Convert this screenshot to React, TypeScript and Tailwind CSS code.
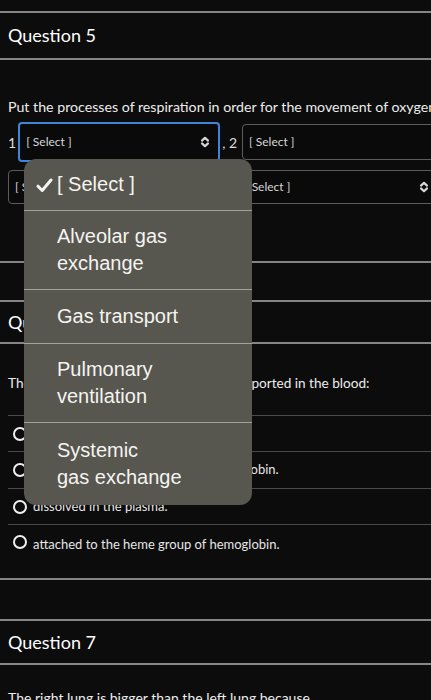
import React from 'react';

function UpDown() {
  return (
    <svg width="10" height="12" viewBox="0 0 10 12" fill="none" stroke="currentColor" strokeWidth="2.2" strokeLinecap="round" strokeLinejoin="round">
      <path d="M2 4.6 5 1.8 8 4.6" />
      <path d="M2 7.4 5 10.2 8 7.4" />
    </svg>
  );
}

function Select({ className }: { className: string }) {
  return (
    <div className={`flex shrink-0 items-center justify-between pl-[6px] pr-[8px] rounded-[4px] bg-[#0a0a0a] text-[12px] text-[#d6d6d6] ${className}`}>
      <span className="whitespace-nowrap">[ Select ]</span>
      <UpDown />
    </div>
  );
}

function Rule() {
  return <div className="h-[2px] bg-[#858585]" />;
}

function Radio({ label, className }: { label: string; className: string }) {
  return (
    <div className={`flex gap-[6px] px-[5px] text-[13px] text-[#e6e6e6] ${className}`}>
      <span className="w-[14px] h-[14px] shrink-0 rounded-full border-2 border-[#f0f0f0]" />
      <span className="whitespace-nowrap">{label}</span>
    </div>
  );
}

const options = [
  { label: ['[ Select ]'], h: 'h-[52px]', check: true },
  { label: ['Alveolar gas', 'exchange'], h: 'h-[79px]' },
  { label: ['Gas transport'], h: 'h-[54px]' },
  { label: ['Pulmonary', 'ventilation'], h: 'h-[79px]' },
  { label: ['Systemic', 'gas exchange'], h: 'h-[82px]' },
];

export default function App() {
  return (
    <div className="relative w-[431px] h-[700px] overflow-hidden bg-[#0c0c0c] font-['Lato',sans-serif] text-white">
      <div className="pt-[11px]">
        <Rule />
        <div className="h-[45px] flex items-center px-2 text-[18px]">Question 5</div>
        <Rule />
        <p className="mt-[37px] px-2 h-[20px] leading-[20px] text-[14.2px] text-[#ececec] whitespace-nowrap">
          Put the processes of respiration in order for the movement of oxygen from the atmosphere to the tissues.
        </p>
        <div className="flex items-center pl-2 mt-[5px] h-[40px] text-[14px] text-[#dedede] whitespace-nowrap">
          <span className="shrink-0">1</span>
          <Select className="ml-[2px] w-[202px] h-[40px] border-2 border-[#3f86d8]" />
          <span className="shrink-0 ml-[2px] mr-[5px]">, 2</span>
          <Select className="w-[212px] h-[36px] border border-[#5c5c5c]" />
        </div>
        <div className="flex items-center pl-2 mt-[8px] h-[34px] text-[14px] text-[#dedede] whitespace-nowrap">
          <Select className="w-[208px] h-[34px] border border-[#5c5c5c]" />
          <span className="shrink-0 ml-[2px] mr-[5px]">, 4</span>
          <Select className="w-[200px] h-[34px] border border-[#5c5c5c]" />
        </div>
        <div className="mt-[57px]">
          <Rule />
        </div>
        <div className="mt-[37px]">
          <Rule />
        </div>
        <div className="h-[40px] flex items-center px-2 text-[18px]">Question 6</div>
        <Rule />
        <p className="mt-[29px] px-2 h-[20px] leading-[20px] text-[13.6px] text-[#ececec] whitespace-nowrap">
          The largest percentage of oxygen is transported in the blood:
        </p>
        <div className="mt-[22px] ml-2">
          <div className="h-[1px] bg-[#4a4a4a]" />
          <Radio label="as bicarbonate ions." className="h-[35px] items-center" />
          <div className="h-[1px] bg-[#4a4a4a]" />
          <Radio label="bound to the globin portion of hemoglobin." className="h-[36px] items-center" />
          <div className="h-[1px] bg-[#4a4a4a]" />
          <Radio label="dissolved in the plasma." className="h-[35px] items-center" />
          <div className="h-[1px] bg-[#4a4a4a]" />
          <Radio label="attached to the heme group of hemoglobin." className="h-[53px] items-start pt-[10px]" />
        </div>
        <Rule />
        <div className="mt-[39px]">
          <Rule />
        </div>
        <div className="h-[42px] flex items-center px-2 text-[18px]">Question 7</div>
        <Rule />
        <p className="mt-[22px] px-2 text-[14px] text-[#ececec] whitespace-nowrap">
          The right lung is bigger than the left lung because
        </p>
      </div>

      <div className="absolute left-[24px] top-[159px] w-[228px] rounded-[12px] bg-[#57564f] font-['Liberation_Sans',sans-serif] text-[20px] leading-[27px] text-[#f4f4f0] overflow-hidden">
        {options.map((o, i) => (
          <div
            key={i}
            className={`relative flex flex-col justify-center pl-[33px] ${o.h} ${i < options.length - 1 ? 'border-b border-[#a3a29a]' : ''}`}
          >
            {o.check && (
              <svg className="absolute left-[12px] top-[19px]" width="17" height="15" viewBox="0 0 17 15" fill="none" stroke="#f4f4f0" strokeWidth="3" strokeLinecap="round" strokeLinejoin="round">
                <path d="M2 8.2 6.2 12.5 15 2" />
              </svg>
            )}
            {o.label.map((t) => (
              <span key={t} className="whitespace-nowrap">{t}</span>
            ))}
          </div>
        ))}
      </div>
    </div>
  );
}
